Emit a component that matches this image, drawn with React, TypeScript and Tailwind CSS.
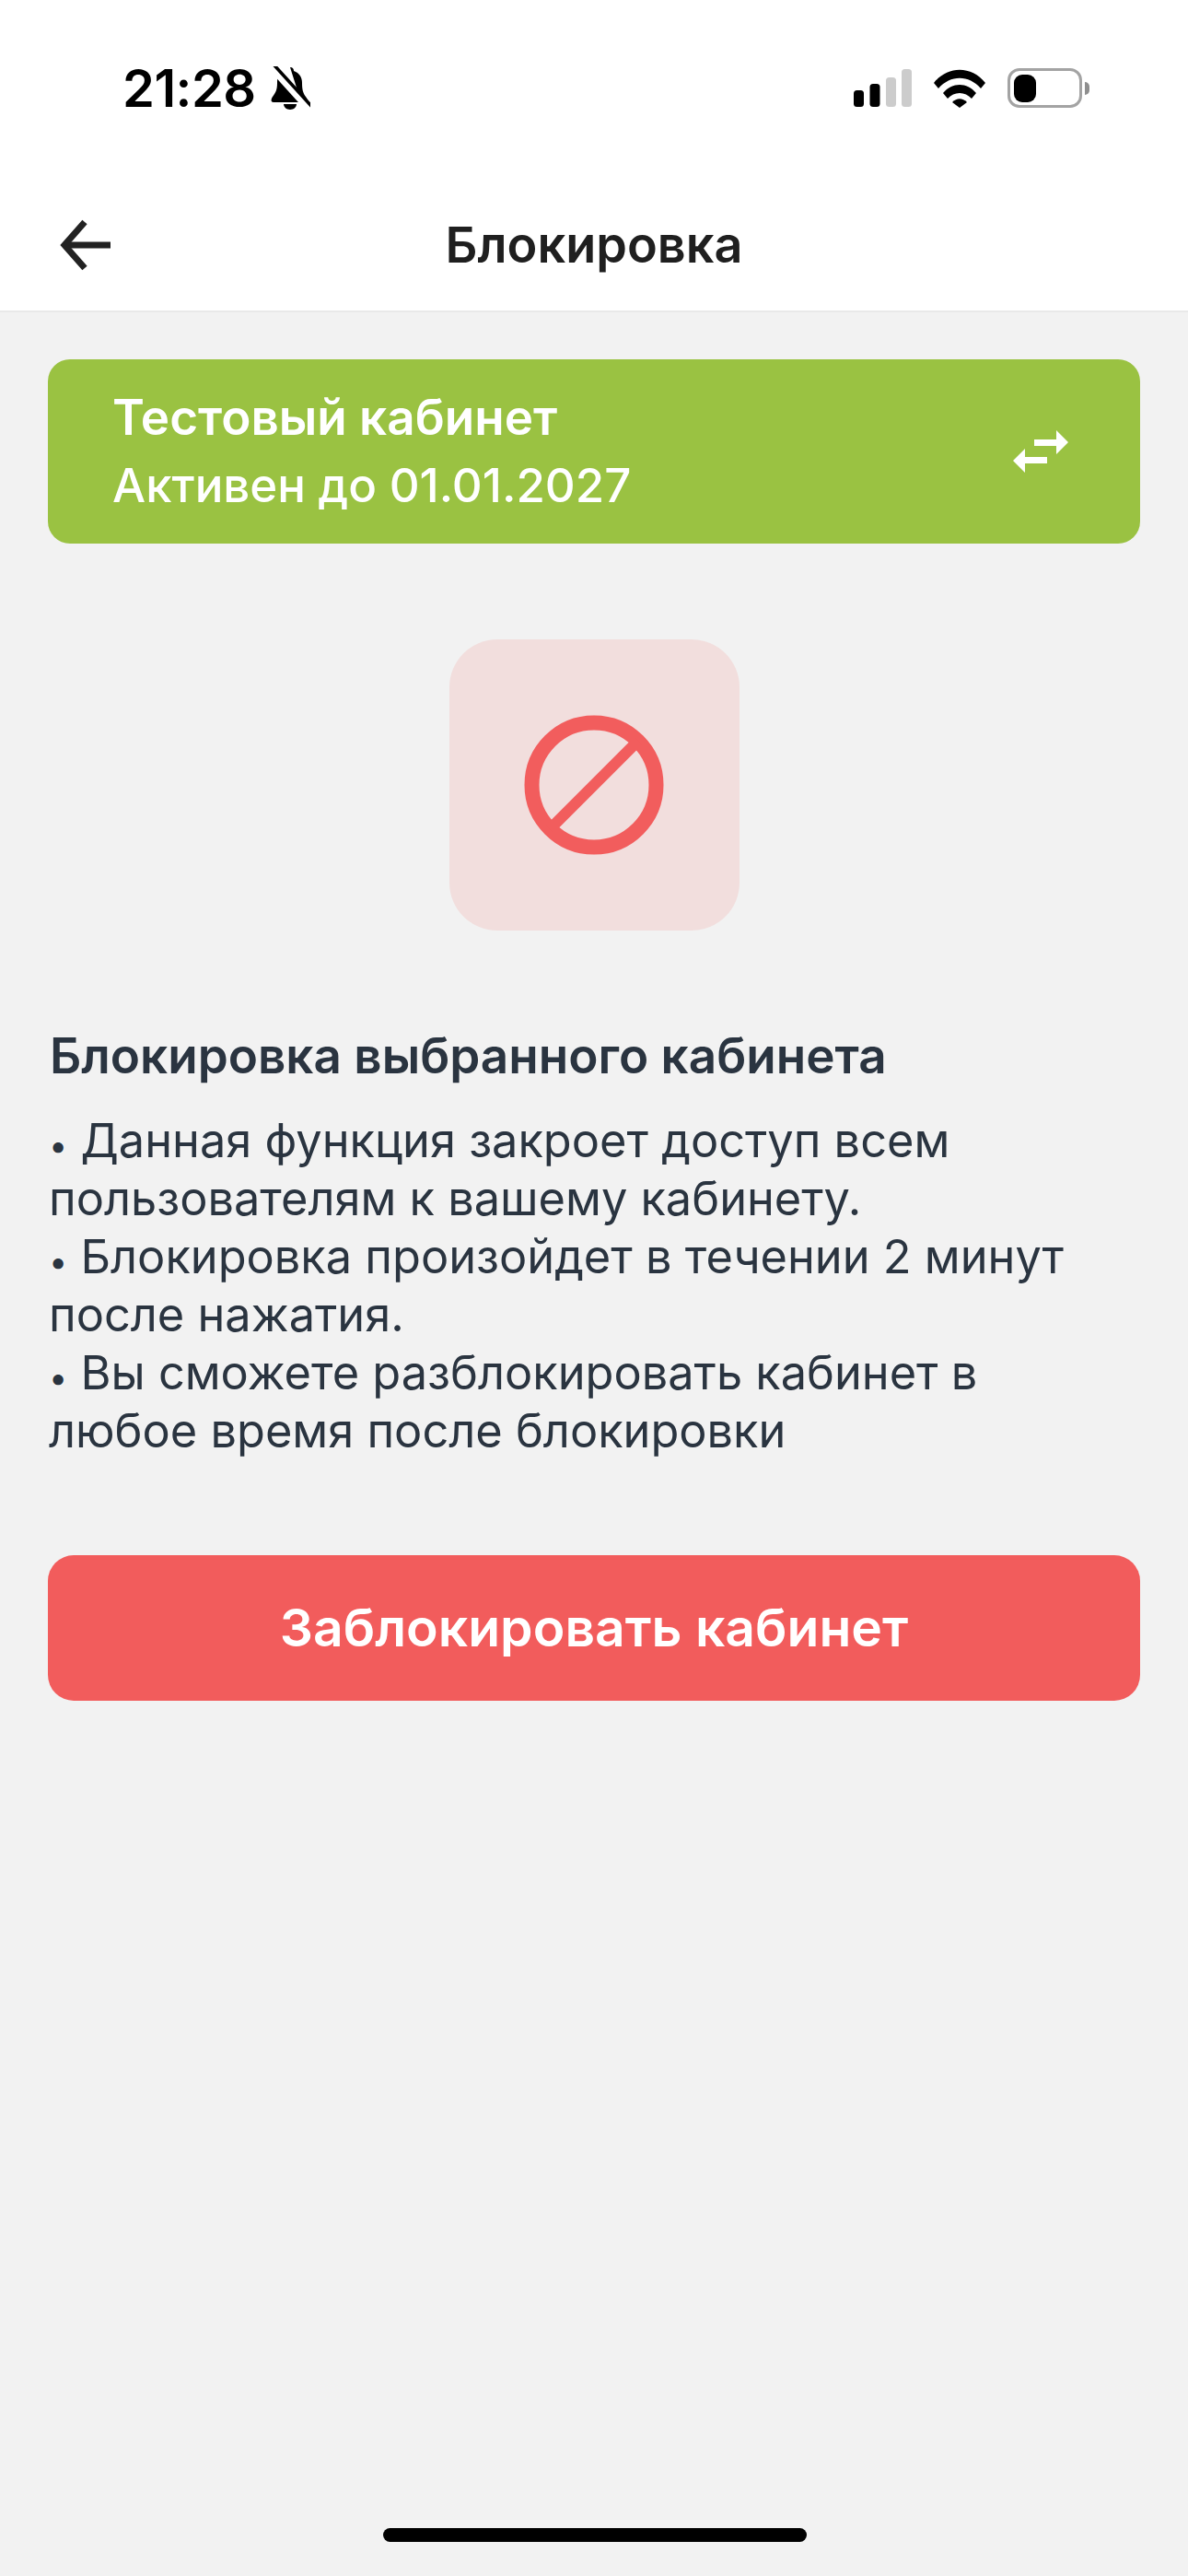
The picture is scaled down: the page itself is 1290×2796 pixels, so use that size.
const font = { fontFamily: "Inter, 'Noto Sans', sans-serif" };

function MutedBell() {
  return (
    <svg width="44" height="48" viewBox="0 0 44 48" className="ml-[15px]">
      <path d="M22 1c3 0 4 2 4 4 6 2 9 7 9 13 0 7 1 11 4 15 2 3 3 5 1 6H4c-3 0-3-3-1-6 3-4 5-7 5-15 0-2 0-5 1-7L34 39z" fill="#000" />
      <path d="M15 41h14c0 3-3 6-7 6s-7-3-7-6z" fill="#000" />
      <path d="M3 3l38 42" stroke="#fff" strokeWidth="7" />
      <path d="M2 2l40 44" stroke="#000" strokeWidth="3.5" strokeLinecap="round" transform="translate(3 -3)" />
    </svg>
  );
}

function StatusIcons() {
  return (
    <div className="flex items-center">
      <svg width="63" height="41" viewBox="0 0 63 41">
        <rect x="0" y="23" width="11" height="18" rx="3.5" fill="#000" />
        <rect x="17.5" y="16" width="11" height="25" rx="3.5" fill="#000" />
        <rect x="35" y="9" width="11" height="32" rx="3.5" fill="#ccc" />
        <rect x="52" y="0" width="11" height="41" rx="3.5" fill="#ccc" />
      </svg>
      <svg width="56" height="42" viewBox="0 0 56 42" className="ml-[24px]">
        <path d="M0 15C15 -4 41 -4 56 15l-5 6C38 6 18 6 5 21z" fill="#000" />
        <path d="M10 26c10-12 26-12 36 0l-5 6c-7-8-19-8-26 0z" fill="#000" />
        <path d="M20 36c5-5 11-5 16 0l-8 6z" fill="#000" />
      </svg>
      <div className="ml-[24px] flex items-center">
        <div className="flex h-[43px] w-[81px] items-center rounded-[13px] border-[3px] border-[#a3a3a3] pl-[4px]">
          <div className="h-[30px] w-[24px] rounded-[9px] bg-black" />
        </div>
        <div className="ml-[3px] h-[14px] w-[5px] rounded-r-full bg-[#8e8e8e]" />
      </div>
    </div>
  );
}

function Bullet() {
  return <span className="text-[36px] leading-none">•</span>;
}

export default function App() {
  return (
    <div style={font} className="relative flex min-h-[2796px] w-[1290px] flex-col bg-[#f2f2f2]">
      <div className="bg-white">
        {/* Status bar */}
        <div className="flex h-[168px] items-start justify-between pl-[133px] pr-[107px] pt-[66px]">
          <div className="flex h-[60px] items-center">
            <span className="text-[56px] font-semibold leading-[60px] tracking-[-0.5px] text-black">21:28</span>
            <MutedBell />
          </div>
          <div className="pt-[8px]">
            <StatusIcons />
          </div>
        </div>

        {/* Header */}
        <div className="relative flex h-[171px] items-center justify-center border-b-2 border-[#e9e9e9] pt-[26px]">
          <button className="absolute left-[64px] top-[69px]">
            <svg width="58" height="58" viewBox="0 0 58 58" fill="none" stroke="#222" strokeWidth="7">
              <path d="M56 29H6" />
              <path d="M28 4L6 29l22 25" />
            </svg>
          </button>
          <h1 className="text-[54px] font-semibold leading-[60px] text-[#1f1f1f]">Блокировка</h1>
        </div>
      </div>

      <div className="flex flex-col px-[52px]">
        {/* Account card */}
        <div className="mt-[51px] flex h-[200px] items-center justify-between rounded-[24px] bg-[#9ac242] pl-[70px] pr-[78px]">
          <div className="text-white">
            <div className="text-[53px] font-semibold leading-[60px]">Тестовый кабинет</div>
            <div className="mt-[14px] text-[51px] font-medium leading-[60px]">Активен до 01.01.2027</div>
          </div>
          <svg width="60" height="46" viewBox="0 0 60 46" fill="#fff">
            <path d="M23 10h24V0l13 13-13 13V17H23z" />
            <path d="M37 29H13V20L0 33l13 13V36h24z" />
          </svg>
        </div>

        {/* Lock icon */}
        <div className="mt-[104px] flex h-[316px] w-[315px] items-center justify-center self-center rounded-[52px] bg-[#f2dedd]">
          <svg width="152" height="152" viewBox="0 0 152 152" fill="none" stroke="#f25d5d" strokeWidth="16">
            <circle cx="76" cy="76" r="67.5" />
            <path d="M28 124L124 28" strokeWidth="12" />
          </svg>
        </div>

        {/* Description */}
        <h2 className="mt-[106px] pl-[2px] text-[53px] font-semibold leading-[60px] text-[#2a3440]">Блокировка выбранного кабинета</h2>
        <p className="mt-[30px] pl-[1px] text-[50.5px] leading-[63px] text-[#2a3440]">
          <Bullet /> Данная функция закроет доступ всем
          <br />
          пользователям к вашему кабинету.
          <br />
          <Bullet /> Блокировка произойдет в течении 2 минут
          <br />
          после нажатия.
          <br />
          <Bullet /> Вы сможете разблокировать кабинет в
          <br />
          любое время после блокировки
        </p>

        <button className="mt-[104px] h-[158px] w-full rounded-[28px] bg-[#f25c5c] text-[57px] font-semibold text-white">
          Заблокировать кабинет
        </button>
      </div>

      {/* Home indicator */}
      <div className="absolute bottom-[37px] left-[416px] h-[15px] w-[460px] rounded-full bg-black" />
    </div>
  );
}
